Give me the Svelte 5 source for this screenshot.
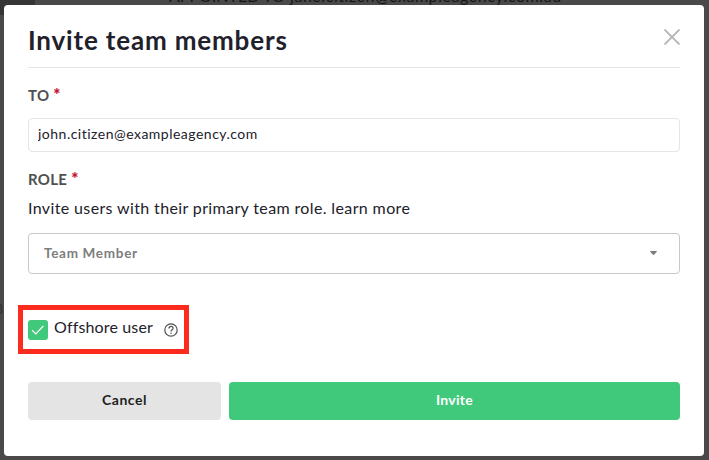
<script lang="ts">
	let email = $state('john.citizen@exampleagency.com');
	let offshore = $state(true);
</script>

<div class="page">
	<div class="page__corner"></div>
	<span class="page__sent"><span>APPOINTED TO</span><span>jane.citizen@exampleagency.com.au</span></span>
	<span class="page__count">3</span>

	<div class="dialog" role="dialog" aria-labelledby="title">
		<header class="dialog__header">
			<h1 id="title">Invite team members</h1>
			<button type="button" class="close" aria-label="Close">
				<svg width="16" height="16" viewBox="0 0 16 16" fill="none" stroke="currentColor" stroke-width="2">
					<path d="M1.1 1.1l13.8 13.8M14.9 1.1L1.1 14.9" stroke-linecap="round" />
				</svg>
			</button>
		</header>

		<label class="label" for="to">TO <b>*</b></label>
		<input id="to" class="input" type="email" bind:value={email} spellcheck="false" />

		<div class="label">ROLE <b>*</b></div>
		<p class="hint">Invite users with their primary team role. learn more</p>

		<button type="button" class="select">
			<span>Team Member</span>
			<svg width="7" height="4" viewBox="0 0 7 4"><path d="M.4 0h6.2q.4.5 0 1L4 3.7q-.5.4-1 0L.4 1q-.4-.5 0-1z" fill="currentColor" /></svg>
		</button>

		<div class="offshore">
			<button
				type="button"
				class="check"
				class:check--on={offshore}
				role="checkbox"
				aria-checked={offshore}
				aria-label="Offshore user"
				onclick={() => (offshore = !offshore)}
			>
				{#if offshore}
					<svg width="20" height="20" viewBox="0 0 20 20" fill="none" stroke="#fff" stroke-width="1.2">
						<path d="M4 10.2l3.8 3.8L15.3 6" />
					</svg>
				{/if}
			</button>
			<span class="offshore__text">Offshore user</span>
			<svg class="help" width="14" height="14" viewBox="0 0 14 14" fill="none" stroke="currentColor" stroke-width="1.2">
				<circle cx="7" cy="7" r="6.2" />
				<path d="M4.9 5.5C4.9 4.2 5.8 3.4 7 3.4s2.1.8 2.1 1.9C9.1 6.8 7 6.8 7 8.5" />
				<circle cx="7" cy="10.3" r=".75" fill="currentColor" stroke="none" />
			</svg>
		</div>

		<footer class="actions">
			<button type="button" class="btn">Cancel</button>
			<button type="button" class="btn btn--primary">Invite</button>
		</footer>
	</div>
</div>

<style>
	:global(body) {
		background: #4a4949;
		overflow: hidden;
	}

	.page {
		position: relative;
		box-sizing: border-box;
		height: 460px;
		padding: 5px 5px 4px 4px;
		overflow: hidden;
		font-family: Lato, sans-serif;
		color: #21212b;
	}

	.page__corner {
		position: absolute;
		left: 0;
		top: 0;
		width: 35px;
		height: 15px;
		background: #353535;
	}

	.page__sent {
		position: absolute;
		left: 169px;
		top: -14px;
		display: flex;
		gap: 9px;
		font-size: 16px;
		line-height: 20px;
		letter-spacing: 0.55px;
		white-space: pre;
		color: #161616;
	}

	.page__sent span:first-child {
		width: 112px;
		letter-spacing: 0;
	}

	.page__count {
		position: absolute;
		left: -5px;
		top: 300px;
		font-size: 14px;
		color: #2f2f2f;
	}

	.dialog {
		position: relative;
		box-sizing: border-box;
		height: 451px;
		padding: 0 24px;
		border-radius: 4px;
		background: #fff;
	}

	.dialog__header {
		display: flex;
		align-items: flex-start;
		justify-content: space-between;
		box-sizing: border-box;
		height: 63px;
		padding-top: 19px;
		border-bottom: 1px solid #e5e5e5;
	}

	h1 {
		margin: 0;
		font-size: 26px;
		line-height: 32px;
		font-weight: 700;
		letter-spacing: 0.83px;
	}

	button {
		font-family: inherit;
		border: 0;
		padding: 0;
		cursor: pointer;
	}

	.close {
		display: flex;
		margin-top: 5px;
		background: none;
		color: #b3b7ba;
	}

	.label {
		display: block;
		margin-top: 17px;
		font-size: 15px;
		line-height: 20px;
		font-weight: 700;
		letter-spacing: 0.3px;
		color: #505050;
	}

	.label b {
		font-size: 17px;
		line-height: 0;
		font-weight: 900;
		color: #c8102e;
	}

	.input {
		display: block;
		box-sizing: border-box;
		width: 100%;
		height: 34px;
		margin-top: 13px;
		padding: 0 9px 3px;
		border: 1px solid #e5e5e5;
		border-radius: 4px;
		outline: none;
		font: 14px Lato, sans-serif;
		letter-spacing: 0.49px;
		color: #21212b;
	}

	.hint {
		margin: 9px 0 0;
		font-size: 16px;
		line-height: 20px;
		letter-spacing: 0.37px;
	}

	.select {
		display: flex;
		align-items: center;
		justify-content: space-between;
		box-sizing: border-box;
		width: 100%;
		height: 41px;
		margin-top: 15px;
		padding: 0 22px 2px 15px;
		border: 1px solid #c8c8c8;
		border-radius: 4px;
		background: #fff;
		font-size: 13.5px;
		font-weight: 700;
		letter-spacing: 0.7px;
		color: #7d7d7d;
	}

	/* highlighted row, its frame runs outside the form column */
	.offshore {
		display: flex;
		align-items: flex-start;
		box-sizing: border-box;
		width: 171px;
		height: 49px;
		margin: 31px 0 0 -10px;
		padding: 10px 0 0 5px;
		border: 5px solid #fc2b1d;
	}

	.check {
		display: flex;
		width: 20px;
		height: 20px;
		border-radius: 3px;
		background: #e5e5e5;
	}

	.check--on {
		background: #41c97b;
	}

	.offshore__text {
		width: 110px;
		margin: -3px 0 0 6px;
		font-size: 16px;
		line-height: 20px;
		letter-spacing: 0.15px;
		white-space: nowrap;
	}

	.help {
		margin-top: 3px;
		color: #505050;
	}

	.actions {
		display: grid;
		grid-template-columns: 193px 1fr;
		gap: 8px;
		margin-top: 28px;
	}

	.btn {
		height: 38px;
		padding-bottom: 3px;
		border-radius: 4px;
		background: #e4e4e4;
		font-size: 14px;
		font-weight: 700;
		letter-spacing: 0.5px;
		color: #1e1e1e;
	}

	.btn--primary {
		background: #41c97b;
		color: #fff;
		letter-spacing: 0.3px;
	}
</style>
